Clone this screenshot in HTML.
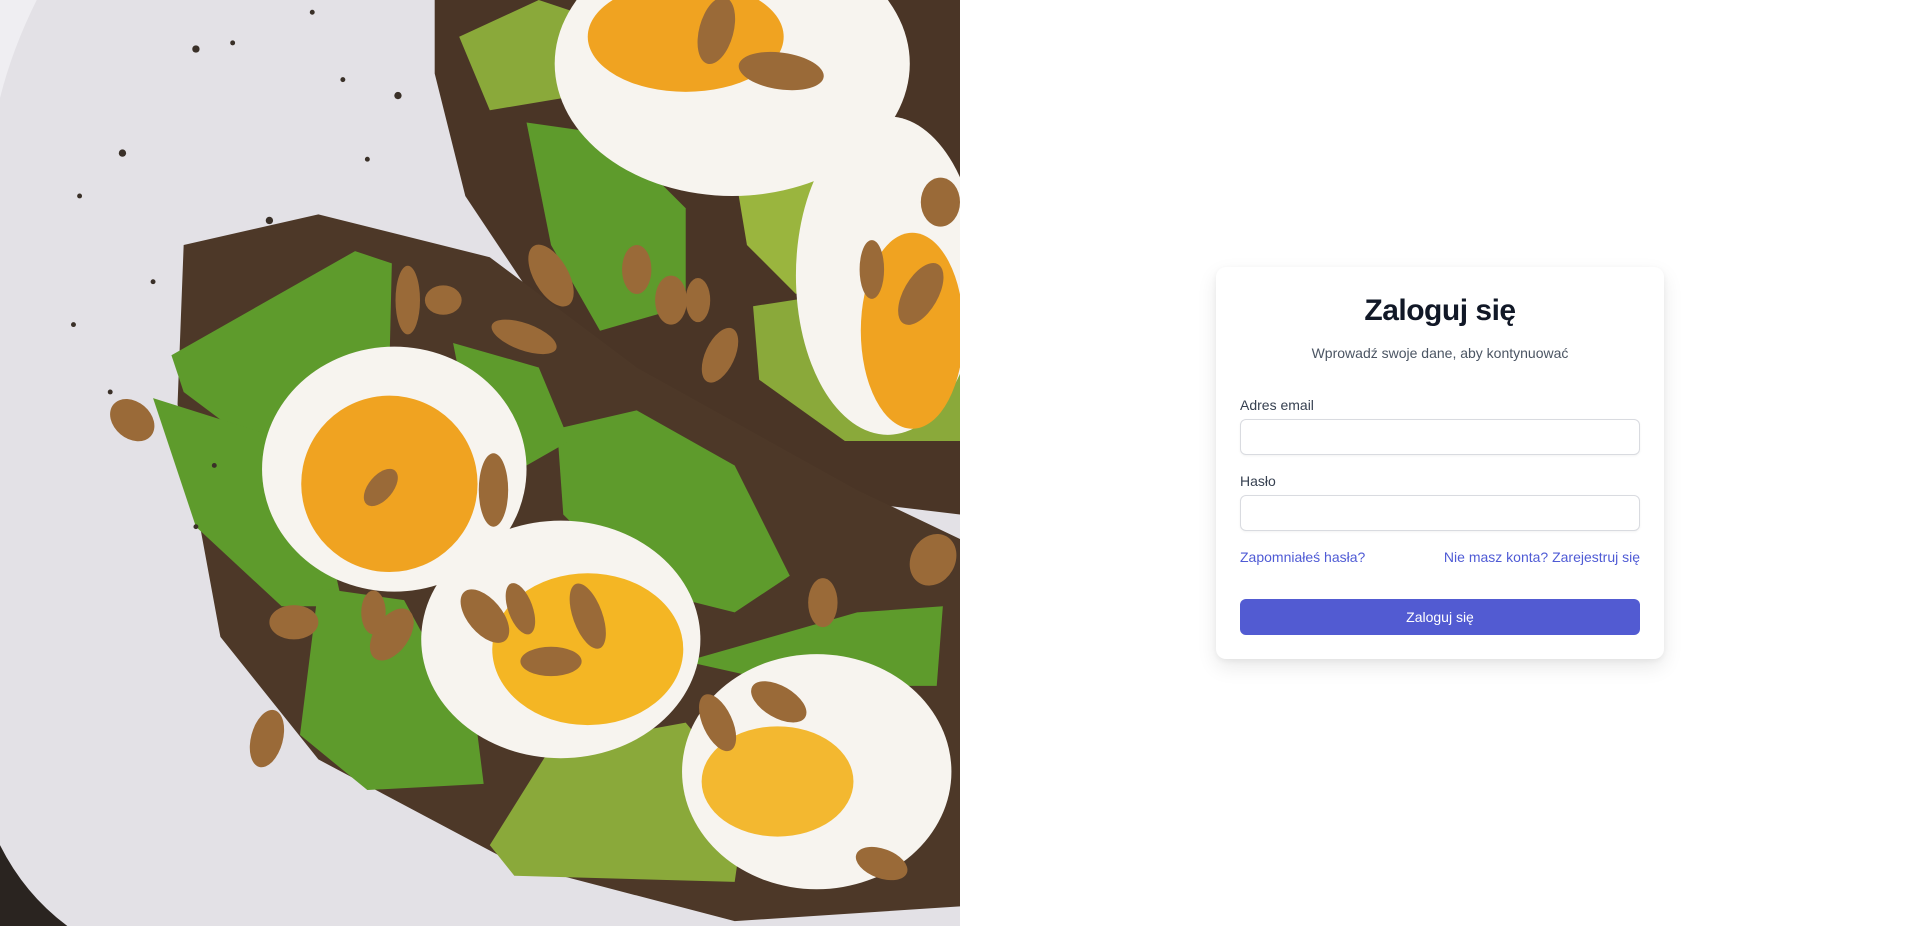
<!DOCTYPE html>
<html><head><meta charset="utf-8">
<style>
*{box-sizing:border-box;margin:0;padding:0}
body{width:1920px;height:926px;overflow:hidden;background:#fff;font-family:"Liberation Sans",sans-serif;position:relative}
#img{position:absolute;left:0;top:0;width:960px;height:926px}
.card{position:absolute;left:1216px;top:267px;width:448px;height:392px;background:#fff;border-radius:10px;box-shadow:0 8px 20px rgba(0,0,0,.09),0 2px 6px rgba(0,0,0,.05);padding:0 24px}
h1{position:absolute;left:0;right:0;top:24px;text-align:center;font-size:30px;font-weight:700;color:#111827;line-height:40px;letter-spacing:-.5px}
.sub{position:absolute;left:0;right:0;top:78px;text-align:center;font-size:14px;color:#4b5563}
label{position:absolute;left:24px;font-size:14px;color:#374151}
.in{position:absolute;left:24px;width:400px;height:36px;border:1px solid #d9dbe0;border-radius:6px;box-shadow:0 1px 2px rgba(0,0,0,.05)}
.lk{position:absolute;top:282px;font-size:14px;color:#4f5bd5}
.btn{position:absolute;left:24px;top:332px;width:400px;height:36px;border-radius:6px;background:#525bd2;color:#fff;font-size:14px;text-align:center;line-height:36px}
</style></head><body>
<svg id="img" viewBox="0 0 784 756" preserveAspectRatio="none" xmlns="http://www.w3.org/2000/svg">
<rect width="784" height="756" fill="#e3e1e6"/>
<path d="M0 690 Q20 730 55 756 L0 756Z" fill="#2a2420"/>
<path d="M0 0 L30 0 Q10 40 0 80Z" fill="#efeef2"/>
<path d="M355 0 L784 0 L784 420 L700 410 L560 330 L440 250 L380 160 L355 60Z" fill="#4a3526"/>
<path d="M150 200 L260 175 L400 210 L520 300 L700 400 L784 440 L784 740 L600 752 L420 705 L260 620 L180 520 L145 330Z" fill="#4d3828"/>
<g fill="#5e9b2c">
<path d="M140 290 L290 205 L320 215 L318 300 L210 365 L150 320Z"/>
<path d="M125 325 L220 355 L270 450 L280 495 L230 495 L160 430Z"/>
<path d="M260 480 L330 490 L390 600 L395 640 L300 645 L245 600Z"/>
<path d="M400 690 L450 610 L560 590 L610 650 L600 720 L420 715Z" fill="#8aa93a"/>
<path d="M455 350 L520 335 L600 380 L645 470 L600 500 L520 480 L460 420Z"/>
<path d="M560 540 L700 500 L770 495 L765 560 L650 560Z"/>
<path d="M375 30 L440 0 L470 10 L460 80 L400 90Z" fill="#8aa93a"/>
<path d="M430 100 L500 110 L560 170 L560 250 L490 270 L450 200Z"/>
<path d="M600 140 L680 120 L700 200 L650 240 L610 200Z" fill="#9ab53e"/>
<path d="M615 250 L680 240 L784 300 L784 360 L690 360 L620 310Z" fill="#8aa93a"/>
<path d="M370 280 L440 300 L465 360 L430 380 L380 330Z"/>
</g>
<g fill="#f7f4ef">
<ellipse cx="322" cy="383" rx="108" ry="100"/>
<ellipse cx="458" cy="522" rx="114" ry="97"/>
<ellipse cx="667" cy="630" rx="110" ry="96"/>
<ellipse cx="598" cy="52" rx="145" ry="108"/>
<ellipse cx="725" cy="225" rx="75" ry="130"/>
</g>
<g fill="#f0a321">
<ellipse cx="318" cy="395" rx="72" ry="72"/>
<ellipse cx="480" cy="530" rx="78" ry="62" fill="#f4b624"/>
<ellipse cx="635" cy="638" rx="62" ry="45" fill="#f3b830"/>
<ellipse cx="560" cy="30" rx="80" ry="45"/>
<ellipse cx="745" cy="270" rx="42" ry="80"/>
</g>
<g fill="#9a6a38">
<ellipse cx="311" cy="398" rx="10" ry="18" transform="rotate(40 311 398)"/>
<ellipse cx="403" cy="400" rx="12" ry="30"/>
<ellipse cx="396" cy="503" rx="14" ry="26" transform="rotate(-40 396 503)"/>
<ellipse cx="425" cy="497" rx="10" ry="22" transform="rotate(-20 425 497)"/>
<ellipse cx="480" cy="503" rx="12" ry="28" transform="rotate(-20 480 503)"/>
<ellipse cx="450" cy="540" rx="25" ry="12"/>
<ellipse cx="586" cy="590" rx="12" ry="25" transform="rotate(-25 586 590)"/>
<ellipse cx="636" cy="573" rx="25" ry="13" transform="rotate(30 636 573)"/>
<ellipse cx="450" cy="225" rx="14" ry="28" transform="rotate(-30 450 225)"/>
<ellipse cx="520" cy="220" rx="12" ry="20"/>
<ellipse cx="588" cy="290" rx="12" ry="24" transform="rotate(25 588 290)"/>
<ellipse cx="428" cy="275" rx="28" ry="11" transform="rotate(20 428 275)"/>
<ellipse cx="585" cy="25" rx="14" ry="28" transform="rotate(15 585 25)"/>
<ellipse cx="638" cy="58" rx="35" ry="15" transform="rotate(8 638 58)"/>
<ellipse cx="712" cy="220" rx="10" ry="24"/>
<ellipse cx="752" cy="240" rx="14" ry="28" transform="rotate(30 752 240)"/>
<ellipse cx="768" cy="165" rx="16" ry="20"/>
<ellipse cx="108" cy="343" rx="20" ry="15" transform="rotate(40 108 343)"/>
<ellipse cx="218" cy="603" rx="13" ry="24" transform="rotate(15 218 603)"/>
<ellipse cx="240" cy="508" rx="20" ry="14"/>
<ellipse cx="320" cy="518" rx="14" ry="24" transform="rotate(35 320 518)"/>
<ellipse cx="305" cy="500" rx="10" ry="18"/>
<ellipse cx="333" cy="245" rx="10" ry="28"/>
<ellipse cx="362" cy="245" rx="15" ry="12"/>
<ellipse cx="762" cy="457" rx="18" ry="22" transform="rotate(30 762 457)"/>
<ellipse cx="672" cy="492" rx="12" ry="20"/>
<ellipse cx="720" cy="705" rx="22" ry="12" transform="rotate(20 720 705)"/>
<ellipse cx="548" cy="245" rx="13" ry="20"/>
<ellipse cx="570" cy="245" rx="10" ry="18"/>
</g>
<g fill="#3a3028">
<circle cx="100" cy="125" r="3"/><circle cx="160" cy="40" r="3"/><circle cx="190" cy="35" r="2"/><circle cx="220" cy="180" r="3"/><circle cx="65" cy="160" r="2"/><circle cx="125" cy="230" r="2"/><circle cx="280" cy="65" r="2"/><circle cx="325" cy="78" r="3"/><circle cx="300" cy="130" r="2"/><circle cx="90" cy="320" r="2"/><circle cx="60" cy="265" r="2"/><circle cx="255" cy="10" r="2"/><circle cx="175" cy="380" r="2"/><circle cx="160" cy="430" r="2"/>
</g>
</svg>
<div class="card">
<h1>Zaloguj się</h1>
<div class="sub">Wprowadź swoje dane, aby kontynuować</div>
<label style="top:130px">Adres email</label>
<div class="in" style="top:152px"></div>
<label style="top:206px">Hasło</label>
<div class="in" style="top:228px"></div>
<div class="lk" style="left:24px">Zapomniałeś hasła?</div>
<div class="lk" style="right:24px">Nie masz konta? Zarejestruj się</div>
<div class="btn">Zaloguj się</div>
</div>
</body></html>
